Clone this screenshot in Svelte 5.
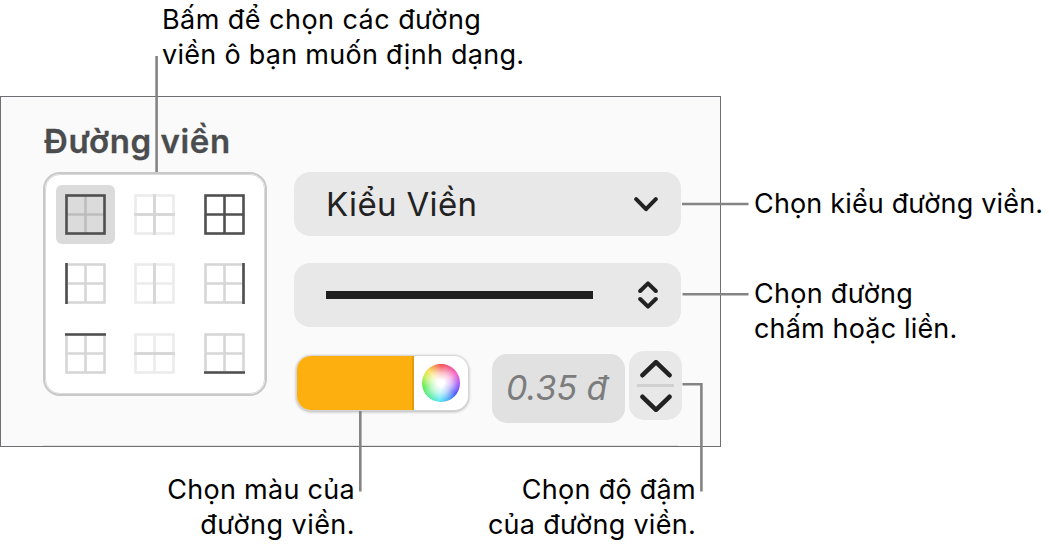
<script>
  const light = '#ebebeb';
  const mid = '#d6d6d6';
  const dark = '#4f4f50';

  // line colours of each border choice: outer sides, then inner vertical/horizontal
  const choices = [
    { name: 'outside', base: dark, v: '#bdbdbd', h: '#bdbdbd' },
    { name: 'inside', base: light, v: mid, h: mid, edge: 'M20.5 0V41M0 20.5H41', edgeColor: mid },
    { name: 'all', base: dark, v: dark, h: dark },
    { name: 'left', base: mid, v: mid, h: mid, edge: 'M1.5 0V41' },
    { name: 'vertical', base: light, v: mid, h: light, edge: 'M20.5 0V41', edgeColor: mid },
    { name: 'right', base: mid, v: mid, h: mid, edge: 'M39.5 0V41' },
    { name: 'top', base: mid, v: mid, h: mid, edge: 'M0 1.5H41' },
    { name: 'horizontal', base: light, v: light, h: mid, edge: 'M0 20.5H41', edgeColor: mid },
    { name: 'bottom', base: mid, v: mid, h: mid, edge: 'M0 39.5H41' }
  ];

  let selected = $state('outside');
</script>

<div class="figure">
  <div class="top">
    <p class="callout"><span class="wide">Bấm để chọn các đường</span><span>viền ô bạn muốn định dạng.</span></p>
  </div>

  <div class="middle">
    <section class="panel">
      <h2>Đường viền</h2>
      <div class="controls">
        <div class="choices">
          {#each choices as c}
            <button class="choice" class:selected={selected === c.name} aria-label={c.name} onclick={() => (selected = c.name)}>
              <svg width="41" height="41" viewBox="0 0 41 41" fill="none" stroke-width="2.6">
                <path d="M20.5 2V39" stroke={c.v} />
                <path d="M2 20.5H39" stroke={c.h} />
                <rect x="1.5" y="1.5" width="38" height="38" stroke={c.base} />
                {#if c.edge}
                  <path d={c.edge} stroke={c.edgeColor || dark} />
                {/if}
              </svg>
            </button>
          {/each}
        </div>

        <div class="settings">
          <div class="select">
            <span class="label">Kiểu Viền</span>
            <svg width="24" height="16" viewBox="0 0 24 16"><path d="M2.2 3.2L12 13.2L21.8 3.2" /></svg>
          </div>
          <div class="select">
            <span class="stroke"></span>
            <svg width="20" height="30" viewBox="0 0 20 30"><path d="M2.2 11L10 3.4L17.8 11M2.2 19L10 26.6L17.8 19" /></svg>
          </div>
          <div class="row">
            <div class="well">
              <span class="color"></span>
              <span class="wheel"></span>
            </div>
            <div class="width">0.35 đ</div>
            <div class="stepper">
              <svg width="32" height="18" viewBox="0 0 32 18"><path d="M2.5 15.2L16 2.2L29.5 15.2" /></svg>
              <i></i>
              <svg width="32" height="18" viewBox="0 0 32 18"><path d="M2.5 2.8L16 15.8L29.5 2.8" /></svg>
            </div>
          </div>
        </div>
      </div>
      <div class="divider"></div>
    </section>

    <div class="side">
      <p class="callout"><span class="tight">Chọn kiểu đường viền.</span></p>
      <p class="callout"><span>Chọn đường</span><span class="tight">chấm hoặc liền.</span></p>
    </div>
  </div>

  <div class="bottom">
    <p class="callout color-note"><span>Chọn màu của</span><span class="wide">đường viền.</span></p>
    <p class="callout width-note"><span>Chọn độ đậm</span><span>của đường viền.</span></p>
  </div>

  <svg class="leaders" width="1049" height="545" viewBox="0 0 1049 545">
    <path d="M156.6 56V172M682 204H748.5M682.5 294.3H748.5M360.3 411V491.5M682.5 384.2H701.4V491.5" />
  </svg>
</div>

<style>
  :global(body) {
    margin: 0;
    background: #fff;
  }

  .figure {
    position: relative;
    width: 1049px;
    height: 545px;
    overflow: hidden;
    font-family: Inter, 'Liberation Sans', sans-serif;
    color: #000;
  }

  .top {
    height: 96px;
    padding: 2px 0 0 162px;
    box-sizing: border-box;
  }

  .callout {
    display: flex;
    flex-direction: column;
    align-items: flex-start;
    margin: 0;
    font-size: 27px;
    line-height: 35px;
    letter-spacing: 0.28px;
    white-space: nowrap;
  }

  .callout .wide {
    letter-spacing: 0.45px;
  }

  .callout .tight {
    letter-spacing: 0.16px;
  }

  .middle {
    display: flex;
    height: 351px;
  }

  .panel {
    width: 721px;
    height: 351px;
    box-sizing: border-box;
    padding: 24px 0 0 42px;
    border: 1px solid #6e6e73;
    background: #fafafa;
  }

  h2 {
    margin: 0;
    height: 51px;
    padding-left: 1px;
    font-size: 33px;
    line-height: 41px;
    font-weight: 600;
    letter-spacing: 0.7px;
    word-spacing: -0.5px;
    color: #4b4c4d;
    -webkit-text-stroke: 0.3px #4b4c4d;
  }

  .controls {
    display: flex;
    gap: 27px;
    height: 272px;
  }

  .choices {
    display: grid;
    grid-template-columns: repeat(3, 59px);
    grid-template-rows: repeat(3, 59px);
    gap: 10.5px;
    width: 224px;
    height: 224px;
    padding: 10.5px;
    box-sizing: border-box;
    border: 2.5px solid #c8c8c8;
    border-radius: 17px;
    background: #fff;
    outline: 0.5px solid #dadada;
    outline-offset: -3px;
  }

  .choice {
    display: flex;
    align-items: center;
    justify-content: center;
    padding: 0;
    border: 0;
    border-radius: 6px;
    background: none;
  }

  .choice.selected {
    background: #dbdbdb;
  }

  .settings {
    width: 388px;
  }

  .select {
    display: flex;
    align-items: center;
    justify-content: space-between;
    width: 387px;
    height: 64px;
    margin-bottom: 27px;
    padding: 0 23px 0 32px;
    box-sizing: border-box;
    border-radius: 16px;
    background: #e8e8e8;
  }

  .label {
    font-size: 33px;
    line-height: 60px;
    letter-spacing: 0.35px;
    color: #222;
  }

  .select svg,
  .stepper svg {
    fill: none;
    stroke: #222;
    stroke-width: 4;
    stroke-linecap: round;
    stroke-linejoin: round;
  }

  .stepper svg {
    stroke-width: 4.6;
  }

  .stroke {
    width: 267px;
    height: 8px;
    background: #1f1f1f;
  }

  .row {
    display: flex;
    align-items: flex-start;
    margin-top: -3px;
  }

  .well {
    display: flex;
    width: 171px;
    height: 54px;
    margin: 5px 0 0 3px;
    border-radius: 14px;
    background: #fff;
    box-shadow: 0 0 1px 1px #d8d8d8, 0 1px 3px 1px #b4b4b4;
  }

  .color {
    width: 115px;
    border-right: 2px solid #e59b0a;
    border-radius: 14px 0 0 14px;
    background: #fdaf0f;
  }

  .wheel {
    width: 38px;
    height: 38px;
    margin: 8px 0 0 8px;
    border-radius: 50%;
    background:
      radial-gradient(circle, #fff 12%, rgba(255, 255, 255, 0.65) 38%, rgba(255, 255, 255, 0) 70%),
      conic-gradient(#f34a4a, #f259c8 60deg, #9a50f5 95deg, #4350f5 125deg, #43a5f7 155deg, #52e8f4 185deg, #51ed9a 220deg, #5bea4b 260deg, #c4ed4c 290deg, #f7df47 315deg, #f34a4a);
  }

  .width {
    width: 133px;
    height: 69px;
    margin: 3px 0 0 24px;
    padding-left: 14px;
    box-sizing: border-box;
    border-radius: 15px;
    background: #e1e1e1;
    font-size: 34px;
    line-height: 67px;
    font-style: italic;
    color: #7c7c7c;
    white-space: nowrap;
  }

  .stepper {
    display: flex;
    flex-direction: column;
    align-items: center;
    width: 53px;
    height: 69px;
    margin-left: 4px;
    padding-top: 8.5px;
    box-sizing: border-box;
    border-radius: 15px;
    background: #e8e8e8;
  }

  .stepper i {
    width: 37px;
    height: 3px;
    margin: 6px 0 7.5px;
    background: #d0d0d0;
  }

  .divider {
    width: 635px;
    height: 1px;
    margin-top: 1px;
    background: #e4e4e4;
  }

  .side {
    padding: 90px 0 0 33px;
  }

  .side .callout + .callout {
    margin-top: 55px;
  }

  .bottom {
    display: flex;
    padding-top: 25px;
  }

  .bottom .callout {
    align-items: flex-end;
  }

  .color-note {
    width: 355px;
  }

  .width-note {
    width: 341px;
  }

  .leaders {
    position: absolute;
    top: 0;
    left: 0;
    fill: none;
    stroke: #848484;
    stroke-width: 2.6;
    pointer-events: none;
  }
</style>
